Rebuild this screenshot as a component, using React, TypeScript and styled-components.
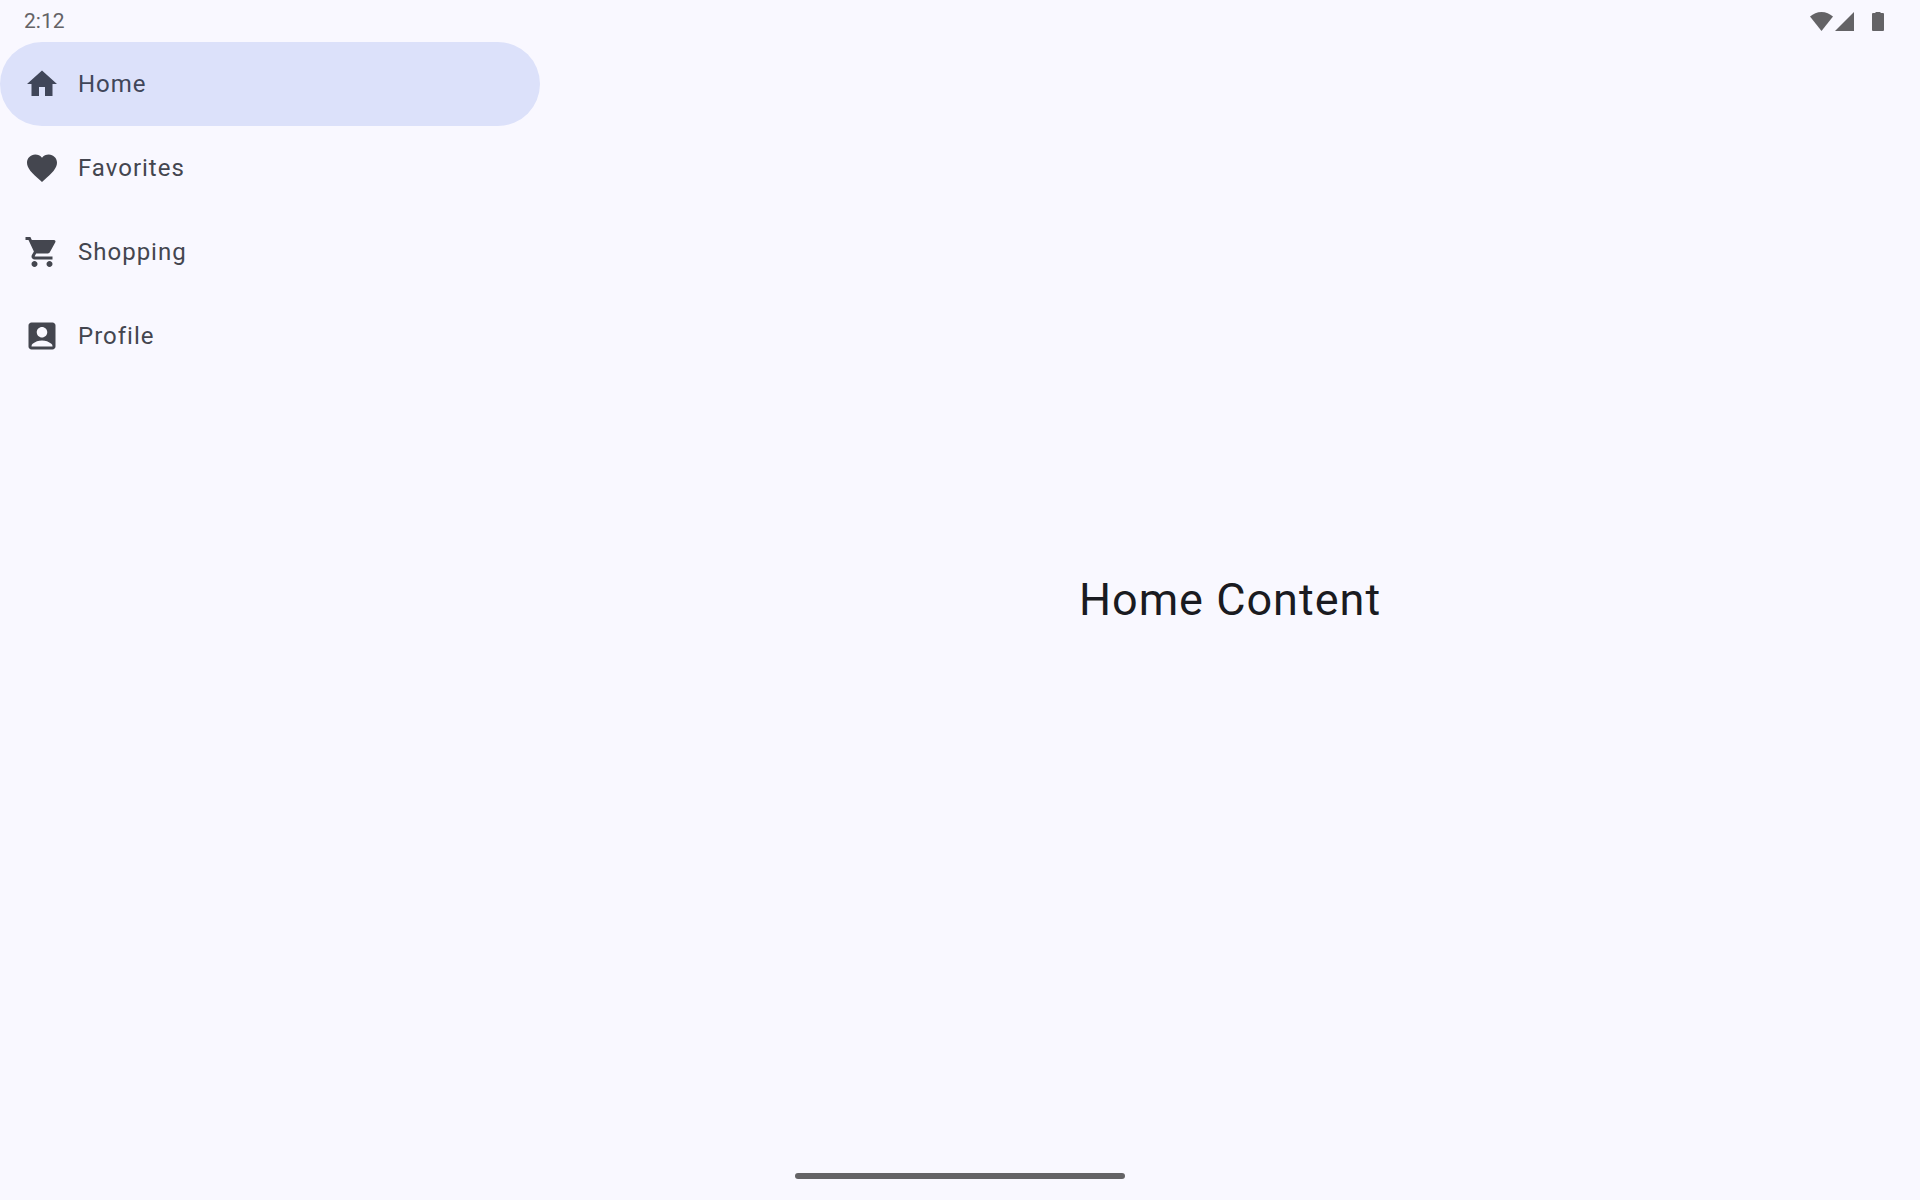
import React, { useState } from "react";
import styled, { createGlobalStyle } from "styled-components";
import { MdAccountBox, MdFavorite, MdHome, MdShoppingCart } from "react-icons/md";

const GlobalStyle = createGlobalStyle`
  * { box-sizing: border-box; }
  body {
    margin: 0;
    background: #f9f8ff;
    font-family: Roboto, "Liberation Sans", sans-serif;
  }
`;

const Screen = styled.div`
  display: flex;
  flex-direction: column;
  min-height: 100vh;
`;

const StatusBar = styled.header`
  display: flex;
  align-items: center;
  justify-content: space-between;
  height: 42px;
  padding: 0 36px 0 24px;
  color: #646366;
`;

const Clock = styled.time`
  font-size: 21px;
  line-height: 24px;
`;

const StatusIcons = styled.div`
  display: flex;
  align-items: center;
  gap: 2px;

  svg {
    display: block;
    fill: currentColor;
  }
`;

const BatteryIcon = styled.svg`
  margin-left: 16px;
`;

const Body = styled.div`
  display: flex;
  flex: 1;
`;

const Drawer = styled.nav`
  display: flex;
  flex-direction: column;
  flex: 0 0 540px;
`;

const DrawerItem = styled.button<{ $selected: boolean }>`
  display: flex;
  align-items: center;
  gap: 18px;
  height: 84px;
  padding: 0 36px 0 24px;
  border: 0;
  border-radius: 42px;
  background: ${({ $selected }) => ($selected ? "#dce1fa" : "transparent")};
  color: ${({ $selected }) => ($selected ? "#404659" : "#44464f")};
  font-family: inherit;
  font-size: 24px;
  line-height: 36px;
  letter-spacing: 1px;
  text-align: left;
  cursor: pointer;

  svg {
    flex: none;
    width: 36px;
    height: 36px;
  }
`;

const Content = styled.main`
  display: flex;
  flex: 1;
  align-items: center;
  justify-content: center;
`;

const Title = styled.h1`
  margin: 0;
  color: #1a1b21;
  font-size: 45px;
  font-weight: 400;
  line-height: 54px;
  letter-spacing: 1px;
`;

const GestureArea = styled.footer`
  display: flex;
  align-items: center;
  justify-content: center;
  height: 42px;
  padding-bottom: 6px;
`;

const GestureHandle = styled.div`
  width: 330px;
  height: 6px;
  border-radius: 3px;
  background: #646366;
`;

const destinations = [
  { label: "Home", Icon: MdHome },
  { label: "Favorites", Icon: MdFavorite },
  { label: "Shopping", Icon: MdShoppingCart },
  { label: "Profile", Icon: MdAccountBox },
];

export default function App() {
  const [current, setCurrent] = useState("Home");

  return (
    <Screen>
      <GlobalStyle />
      <StatusBar>
        <Clock>2:12</Clock>
        <StatusIcons>
          <svg width="23" height="19" viewBox="0 0 23 19" aria-hidden="true">
            <path d="M0 4.6C3.2 1.7 7.2 0 11.5 0S19.8 1.7 23 4.6L11.5 19Z" />
          </svg>
          <svg width="19" height="19" viewBox="0 0 19 19" aria-hidden="true">
            <path d="M19 0V19H0Z" />
          </svg>
          <BatteryIcon width="12" height="19" viewBox="0 0 12 19" aria-hidden="true">
            <path d="M3.5 0h5v1H11a1 1 0 0 1 1 1v16a1 1 0 0 1-1 1H1a1 1 0 0 1-1-1V2a1 1 0 0 1 1-1h2.500Z" />
          </BatteryIcon>
        </StatusIcons>
      </StatusBar>
      <Body>
        <Drawer>
          {destinations.map(({ label, Icon }) => (
            <DrawerItem
              key={label}
              type="button"
              $selected={label === current}
              aria-current={label === current ? "page" : undefined}
              onClick={() => setCurrent(label)}
            >
              <Icon aria-hidden="true" />
              {label}
            </DrawerItem>
          ))}
        </Drawer>
        <Content>
          <Title>{current} Content</Title>
        </Content>
      </Body>
      <GestureArea>
        <GestureHandle />
      </GestureArea>
    </Screen>
  );
}
